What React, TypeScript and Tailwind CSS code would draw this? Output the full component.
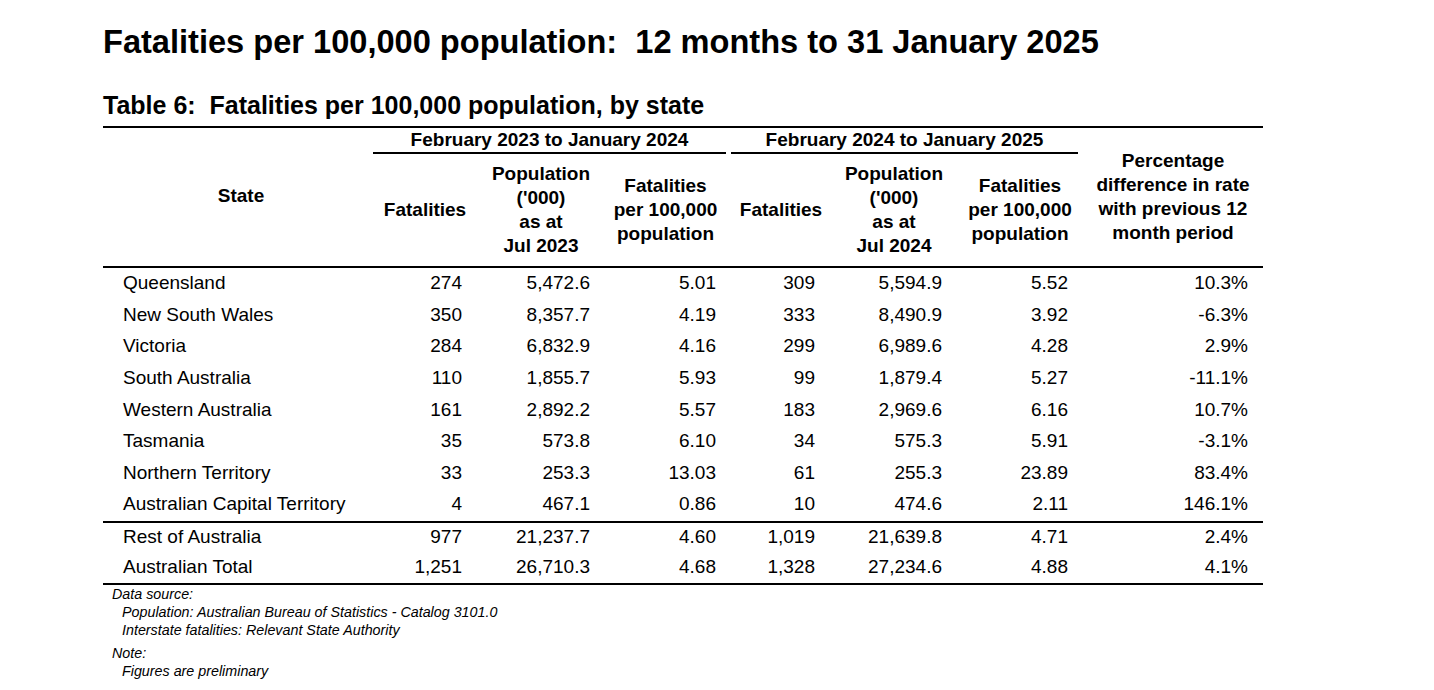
import React from 'react';

type Row = {
  state: string;
  f1: string;
  p1: string;
  r1: string;
  f2: string;
  p2: string;
  r2: string;
  pct: string;
};

const stateRows: Row[] = [
  { state: 'Queensland', f1: '274', p1: '5,472.6', r1: '5.01', f2: '309', p2: '5,594.9', r2: '5.52', pct: '10.3%' },
  { state: 'New South Wales', f1: '350', p1: '8,357.7', r1: '4.19', f2: '333', p2: '8,490.9', r2: '3.92', pct: '-6.3%' },
  { state: 'Victoria', f1: '284', p1: '6,832.9', r1: '4.16', f2: '299', p2: '6,989.6', r2: '4.28', pct: '2.9%' },
  { state: 'South Australia', f1: '110', p1: '1,855.7', r1: '5.93', f2: '99', p2: '1,879.4', r2: '5.27', pct: '-11.1%' },
  { state: 'Western Australia', f1: '161', p1: '2,892.2', r1: '5.57', f2: '183', p2: '2,969.6', r2: '6.16', pct: '10.7%' },
  { state: 'Tasmania', f1: '35', p1: '573.8', r1: '6.10', f2: '34', p2: '575.3', r2: '5.91', pct: '-3.1%' },
  { state: 'Northern Territory', f1: '33', p1: '253.3', r1: '13.03', f2: '61', p2: '255.3', r2: '23.89', pct: '83.4%' },
  { state: 'Australian Capital Territory', f1: '4', p1: '467.1', r1: '0.86', f2: '10', p2: '474.6', r2: '2.11', pct: '146.1%' },
];

const totalRows: Row[] = [
  { state: 'Rest of Australia', f1: '977', p1: '21,237.7', r1: '4.60', f2: '1,019', p2: '21,639.8', r2: '4.71', pct: '2.4%' },
  { state: 'Australian Total', f1: '1,251', p1: '26,710.3', r1: '4.68', f2: '1,328', p2: '27,234.6', r2: '4.88', pct: '4.1%' },
];

const DataRow: React.FC<{ row: Row; height: string }> = ({ row, height }) => (
  <div className={`flex items-center ${height}`}>
    <div className="w-[270px] pl-[20px]">{row.state}</div>
    <div className="w-[104px] pr-[15px] text-right">{row.f1}</div>
    <div className="w-[128px] pr-[15px] text-right">{row.p1}</div>
    <div className="w-[126px] pr-[15px] text-right">{row.r1}</div>
    <div className="w-[100px] pr-[16px] text-right">{row.f2}</div>
    <div className="w-[126px] pr-[15px] text-right">{row.p2}</div>
    <div className="w-[126px] pr-[15px] text-right">{row.r2}</div>
    <div className="w-[180px] pr-[15px] text-right">{row.pct}</div>
  </div>
);

const PeriodHeader: React.FC<{ title: string; asAt: string; widths: [string, string, string] }> = ({
  title,
  asAt,
  widths,
}) => (
  <div className="flex flex-col">
    <div className="h-[24px] leading-[24px] text-center mr-[5px]">{title}</div>
    <div className="h-[1.5px] bg-black mr-[5px]" />
    <div className="flex h-[112px] items-center leading-[24px] text-center">
      <div className={widths[0]}>Fatalities</div>
      <div className={widths[1]}>
        Population
        <br />
        ('000)
        <br />
        as at
        <br />
        {asAt}
      </div>
      <div className={widths[2]}>
        Fatalities
        <br />
        per 100,000
        <br />
        population
      </div>
    </div>
  </div>
);

const App: React.FC = () => {
  return (
    <div className="min-h-screen bg-white text-black font-['Liberation_Sans',Arial,sans-serif]">
      <div className="pl-[103px] pt-[24px]">
        {/* Page title */}
        <h1 className="text-[32.6px] font-bold leading-[36px]">
          Fatalities per 100,000 population:&nbsp; 12 months to 31 January 2025
        </h1>
        <h2 className="mt-[31px] text-[25px] font-bold leading-[28px]">
          Table 6:&nbsp; Fatalities per 100,000 population, by state
        </h2>

        {/* Table */}
        <div className="mt-[7px] w-[1160px] text-[19px]">
          <div className="flex border-t-2 border-b-2 border-black font-bold">
            <div className="w-[270px] h-[137px] pl-[6px] flex items-center justify-center">State</div>
            <div className="w-[358px]">
              <PeriodHeader
                title="February 2023 to January 2024"
                asAt="Jul 2023"
                widths={['w-[104px]', 'w-[128px]', 'w-[126px] pr-[5px]']}
              />
            </div>
            <div className="w-[352px]">
              <PeriodHeader
                title="February 2024 to January 2025"
                asAt="Jul 2024"
                widths={['w-[100px]', 'w-[126px]', 'w-[126px]']}
              />
            </div>
            <div className="w-[180px] h-[137px] flex items-center justify-center text-center leading-[24px]">
              Percentage
              <br />
              difference in rate
              <br />
              with previous 12
              <br />
              month period
            </div>
          </div>

          <div className="border-b-2 border-black">
            {stateRows.map((r) => (
              <DataRow key={r.state} row={r} height="h-[31.625px]" />
            ))}
          </div>
          <div className="border-b-2 border-black">
            {totalRows.map((r) => (
              <DataRow key={r.state} row={r} height="h-[30px]" />
            ))}
          </div>
        </div>

        {/* Footnotes */}
        <div className="text-[14.3px] italic leading-[18px]">
          <div className="pl-[9px]">Data source:</div>
          <div className="pl-[19px]">Population: Australian Bureau of Statistics - Catalog 3101.0</div>
          <div className="pl-[19px]">Interstate fatalities: Relevant State Authority</div>
          <div className="pl-[9px] mt-[5px]">Note:</div>
          <div className="pl-[19px]">Figures are preliminary</div>
        </div>
      </div>
    </div>
  );
};

export default App;
